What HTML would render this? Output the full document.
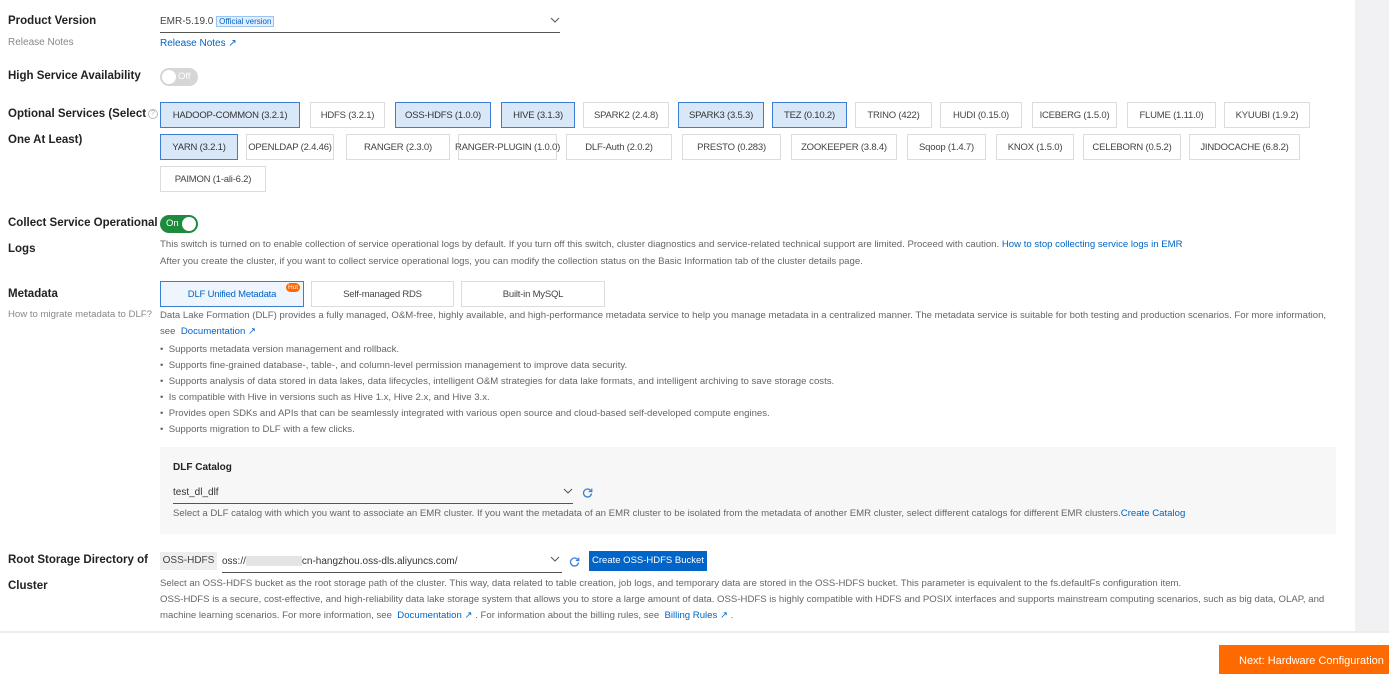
<!DOCTYPE html>
<html><head><meta charset="utf-8"><style>
*{box-sizing:border-box;margin:0;padding:0}
body{width:1389px;height:674px;overflow:hidden;background:#fff;font-family:"Liberation Sans",sans-serif;color:#333;position:relative}
.a{position:absolute;white-space:nowrap}
.lbl{font-size:11.5px;font-weight:bold;color:#222}
.sub{font-size:10px;color:#888}
.d{font-size:9.6px;color:#666}
.lk{color:#0064c8}
.b{position:absolute;height:26px;border:1px solid #dcdcdc;background:#fff;font-size:9.5px;color:#444;display:flex;align-items:center;justify-content:center;white-space:nowrap;letter-spacing:-0.2px}
.b.s{background:#d9e8f8;border:1px solid #3a7fd5;color:#333}
.sb{position:absolute;left:1355px;top:0;width:34px;height:631px;background:#f1f1f3}
</style></head><body>
<div class="sb"></div>
<div class="a lbl" style="left:8px;top:15px">Product Version</div>
<div class="a sub" style="left:8px;top:37px">Release Notes</div>
<div class="a" style="left:160px;top:16px;font-size:10px;color:#444">EMR-5.19.0 <span style="font-size:8px;color:#0064c8;background:#e3effc;border:1px solid #9bc3ef;padding:0 2px">Official version</span></div>
<div class="a" style="left:160px;top:32px;width:400px;border-top:1px solid #555"></div>
<svg class="a" style="left:550px;top:17px" width="10" height="8"><path d="M1 1l4 4 4-4" fill="none" stroke="#555"/></svg>
<div class="a lk" style="left:160px;top:38px;font-size:10px">Release Notes ↗</div>

<div class="a lbl" style="left:8px;top:70px">High Service Availability</div>
<div class="a" style="left:160px;top:68px;width:38px;height:18px;border-radius:9px;background:#d6d6d6"><div style="position:absolute;left:2px;top:2px;width:14px;height:14px;border-radius:7px;background:#fff"></div><span style="position:absolute;left:18px;top:4px;font-size:9.5px;line-height:10px;color:#fff">Off</span></div>

<div class="a lbl" style="left:8px;top:101px;line-height:26px">Optional Services (Select<br>One At Least)</div>
<div class="a" style="left:148px;top:109px;width:10px;height:10px;border:1px solid #bbb;border-radius:50%;font-size:7px;color:#aaa;text-align:center;line-height:8px">?</div>

<div class="b s" style="left:160px;top:102px;width:140px">HADOOP-COMMON (3.2.1)</div>
<div class="b" style="left:310px;top:102px;width:75px">HDFS (3.2.1)</div>
<div class="b s" style="left:395px;top:102px;width:96px">OSS-HDFS (1.0.0)</div>
<div class="b s" style="left:501px;top:102px;width:74px">HIVE (3.1.3)</div>
<div class="b" style="left:583px;top:102px;width:86px">SPARK2 (2.4.8)</div>
<div class="b s" style="left:678px;top:102px;width:86px">SPARK3 (3.5.3)</div>
<div class="b s" style="left:772px;top:102px;width:75px">TEZ (0.10.2)</div>
<div class="b" style="left:855px;top:102px;width:77px">TRINO (422)</div>
<div class="b" style="left:940px;top:102px;width:82px">HUDI (0.15.0)</div>
<div class="b" style="left:1032px;top:102px;width:85px">ICEBERG (1.5.0)</div>
<div class="b" style="left:1127px;top:102px;width:89px">FLUME (1.11.0)</div>
<div class="b" style="left:1224px;top:102px;width:86px">KYUUBI (1.9.2)</div>

<div class="b s" style="left:160px;top:134px;width:78px">YARN (3.2.1)</div>
<div class="b" style="left:246px;top:134px;width:88px">OPENLDAP (2.4.46)</div>
<div class="b" style="left:346px;top:134px;width:104px">RANGER (2.3.0)</div>
<div class="b" style="left:458px;top:134px;width:99px">RANGER-PLUGIN (1.0.0)</div>
<div class="b" style="left:566px;top:134px;width:106px">DLF-Auth (2.0.2)</div>
<div class="b" style="left:682px;top:134px;width:99px">PRESTO (0.283)</div>
<div class="b" style="left:791px;top:134px;width:106px">ZOOKEEPER (3.8.4)</div>
<div class="b" style="left:907px;top:134px;width:79px">Sqoop (1.4.7)</div>
<div class="b" style="left:996px;top:134px;width:78px">KNOX (1.5.0)</div>
<div class="b" style="left:1083px;top:134px;width:98px">CELEBORN (0.5.2)</div>
<div class="b" style="left:1189px;top:134px;width:111px">JINDOCACHE (6.8.2)</div>
<div class="b" style="left:160px;top:166px;width:106px">PAIMON (1-ali-6.2)</div>

<div class="a lbl" style="left:8px;top:210px;line-height:26px">Collect Service Operational<br>Logs</div>
<div class="a" style="left:160px;top:215px;width:38px;height:18px;border-radius:9px;background:#1e8a3e"><span style="position:absolute;left:6px;top:4px;font-size:9.5px;line-height:10px;color:#fff">On</span><div style="position:absolute;right:2px;top:2px;width:14px;height:14px;border-radius:7px;background:#fff"></div></div>
<div class="a d" style="left:160px;top:239px">This switch is turned on to enable collection of service operational logs by default. If you turn off this switch, cluster diagnostics and service-related technical support are limited. Proceed with caution. <span class="lk">How to stop collecting service logs in EMR</span></div>
<div class="a d" style="left:160px;top:256px">After you create the cluster, if you want to collect service operational logs, you can modify the collection status on the Basic Information tab of the cluster details page.</div>

<div class="a lbl" style="left:8px;top:288px">Metadata</div>
<div class="a sub" style="left:8px;top:309px;font-size:9.6px">How to migrate metadata to DLF?</div>
<div class="b" style="left:160px;top:281px;width:144px;background:#eef5fd;border-color:#3a7fd5;color:#0064c8">DLF Unified Metadata</div>
<div class="a" style="left:286px;top:283px;background:#f60;color:#fff;font-size:6.5px;border-radius:5px;padding:1px 2px">Hot</div>
<div class="b" style="left:311px;top:281px;width:143px">Self-managed RDS</div>
<div class="b" style="left:461px;top:281px;width:144px">Built-in MySQL</div>
<div class="a d" style="left:160px;top:310px">Data Lake Formation (DLF) provides a fully managed, O&amp;M-free, highly available, and high-performance metadata service to help you manage metadata in a centralized manner. The metadata service is suitable for both testing and production scenarios. For more information,</div>
<div class="a d" style="left:160px;top:326px">see &nbsp;<span class="lk">Documentation ↗</span></div>
<div class="a d" style="left:160px;top:342px;line-height:16px">• &nbsp;Supports metadata version management and rollback.<br>• &nbsp;Supports fine-grained database-, table-, and column-level permission management to improve data security.<br>• &nbsp;Supports analysis of data stored in data lakes, data lifecycles, intelligent O&amp;M strategies for data lake formats, and intelligent archiving to save storage costs.<br>• &nbsp;Is compatible with Hive in versions such as Hive 1.x, Hive 2.x, and Hive 3.x.<br>• &nbsp;Provides open SDKs and APIs that can be seamlessly integrated with various open source and cloud-based self-developed compute engines.<br>• &nbsp;Supports migration to DLF with a few clicks.</div>

<div class="a" style="left:160px;top:447px;width:1176px;height:87px;background:#f7f7f7"></div>
<div class="a" style="left:173px;top:462px;font-size:10px;font-weight:bold;color:#222">DLF Catalog</div>
<div class="a" style="left:173px;top:487px;font-size:10px;color:#333">test_dl_dlf</div>
<div class="a" style="left:173px;top:503px;width:400px;border-top:1px solid #555"></div>
<svg class="a" style="left:563px;top:488px" width="10" height="8"><path d="M1 1l4 4 4-4" fill="none" stroke="#555"/></svg>
<svg class="a" style="left:582px;top:487px" width="11" height="11"><path d="M9 4A4 4 0 1 0 9.5 6.5" fill="none" stroke="#3a7fd5" stroke-width="1.3"/><path d="M9.8 1.5V4.5H6.8" fill="none" stroke="#3a7fd5" stroke-width="1.2"/></svg>
<div class="a d" style="left:173px;top:508px">Select a DLF catalog with which you want to associate an EMR cluster. If you want the metadata of an EMR cluster to be isolated from the metadata of another EMR cluster, select different catalogs for different EMR clusters.<span class="lk">Create Catalog</span></div>

<div class="a lbl" style="left:8px;top:547px;line-height:26px">Root Storage Directory of<br>Cluster</div>
<div class="a" style="left:160px;top:552px;width:57px;height:18px;background:#eee;font-size:10px;color:#444;text-align:center;line-height:18px">OSS-HDFS</div>
<div class="a" style="left:222px;top:556px;font-size:10px;color:#333">oss://<span style="display:inline-block;width:56px;height:10px;background:#e4e4e4;vertical-align:middle"></span>cn-hangzhou.oss-dls.aliyuncs.com/</div>
<div class="a" style="left:222px;top:572px;width:340px;border-top:1px solid #555"></div>
<svg class="a" style="left:550px;top:556px" width="10" height="8"><path d="M1 1l4 4 4-4" fill="none" stroke="#555"/></svg>
<svg class="a" style="left:569px;top:556px" width="11" height="11"><path d="M9 4A4 4 0 1 0 9.5 6.5" fill="none" stroke="#3a7fd5" stroke-width="1.3"/><path d="M9.8 1.5V4.5H6.8" fill="none" stroke="#3a7fd5" stroke-width="1.2"/></svg>
<div class="a" style="left:589px;top:551px;width:118px;height:20px;background:#0064c8;color:#fff;font-size:9.5px;text-align:center;line-height:20px">Create OSS-HDFS Bucket</div>
<div class="a d" style="left:160px;top:576px;line-height:16px">Select an OSS-HDFS bucket as the root storage path of the cluster. This way, data related to table creation, job logs, and temporary data are stored in the OSS-HDFS bucket. This parameter is equivalent to the fs.defaultFs configuration item.<br>OSS-HDFS is a secure, cost-effective, and high-reliability data lake storage system that allows you to store a large amount of data. OSS-HDFS is highly compatible with HDFS and POSIX interfaces and supports mainstream computing scenarios, such as big data, OLAP, and<br>machine learning scenarios. For more information, see &nbsp;<span class="lk">Documentation ↗</span> . For information about the billing rules, see &nbsp;<span class="lk">Billing Rules ↗</span> .</div>

<div class="a" style="left:0;top:631px;width:1389px;border-top:2px solid #ececec"></div>
<div class="a" style="left:1219px;top:645px;width:170px;height:29px;background:#ff6a00;color:#fff;font-size:11px;line-height:32px;padding-left:20px">Next: Hardware Configuration</div>
</body></html>
